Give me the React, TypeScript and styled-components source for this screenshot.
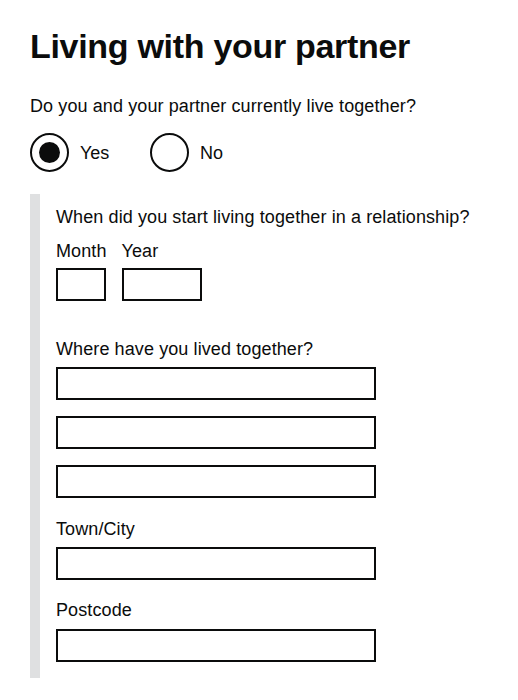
import React from "react";
import styled, { createGlobalStyle } from "styled-components";

const Global = createGlobalStyle`
  html, body { margin: 0; padding: 0; background: #ffffff; }
  body { font-family: "Liberation Sans", Arial, sans-serif; color: #0b0c0c; }
  * { box-sizing: border-box; }
`;

const Page = styled.main`
  padding: 26px 30px 0 30px;
  width: 518px;
`;

const Heading = styled.h1`
  margin: 0 0 28px 0;
  font-size: 34px;
  line-height: 40px;
  font-weight: 700;
  letter-spacing: -0.3px;
`;

const Text = styled.p<{ $mb?: number }>`
  margin: 0 0 ${(p) => p.$mb ?? 0}px 0;
  font-size: 18px;
  line-height: 24px;
  letter-spacing: 0.1px;
`;

const RadioRow = styled.div`
  display: flex;
  margin-top: 15px;
`;

const RadioItem = styled.label`
  display: flex;
  align-items: center;
  width: 120px;
  font-size: 18px;
  line-height: 24px;
`;

const Circle = styled.span<{ $checked?: boolean }>`
  width: 39px;
  height: 39px;
  border: 2px solid #0b0c0c;
  border-radius: 50%;
  margin-right: 11px;
  display: flex;
  align-items: center;
  justify-content: center;
  &::after {
    content: "";
    display: ${(p) => (p.$checked ? "block" : "none")};
    width: 21px;
    height: 21px;
    border-radius: 50%;
    background: #0b0c0c;
  }
`;

const Conditional = styled.div`
  margin-top: 22px;
  border-left: 10px solid #dfe0e1;
  padding: 11px 0 16px 16px;
`;

const DateRow = styled.div`
  display: flex;
  gap: 15px;
  margin-top: 10px;
  margin-bottom: 36px;
`;

const DateItem = styled.div<{ $w: number }>`
  display: flex;
  flex-direction: column;
  flex: 0 0 ${(p) => p.$w}px;
  white-space: nowrap;
`;

const Label = styled.label<{ $mb?: number }>`
  font-size: 18px;
  line-height: 24px;
  letter-spacing: 0.1px;
  margin-bottom: ${(p) => p.$mb ?? 6}px;
`;

const Input = styled.div<{ $w: number; $mb?: number }>`
  width: ${(p) => p.$w}px;
  height: 33px;
  border: 2px solid #0b0c0c;
  margin-bottom: ${(p) => p.$mb ?? 0}px;
`;

export default function App() {
  return (
    <>
      <Global />
      <Page>
        <Heading>Living with your partner</Heading>
        <Text>Do you and your partner currently live together?</Text>
        <RadioRow>
          <RadioItem>
            <Circle $checked />
            Yes
          </RadioItem>
          <RadioItem>
            <Circle />
            No
          </RadioItem>
        </RadioRow>
        <Conditional>
          <Text>When did you start living together in a relationship?</Text>
          <DateRow>
            <DateItem $w={50}>
              <Label $mb={5}>Month</Label>
              <Input $w={50} />
            </DateItem>
            <DateItem $w={80}>
              <Label $mb={5}>Year</Label>
              <Input $w={80} />
            </DateItem>
          </DateRow>
          <Label as="div">Where have you lived together?</Label>
          <Input $w={320} $mb={16} />
          <Input $w={320} $mb={16} />
          <Input $w={320} $mb={19} />
          <Label as="div">Town/City</Label>
          <Input $w={320} $mb={18} />
          <Label as="div" $mb={7}>Postcode</Label>
          <Input $w={320} />
        </Conditional>
      </Page>
    </>
  );
}
